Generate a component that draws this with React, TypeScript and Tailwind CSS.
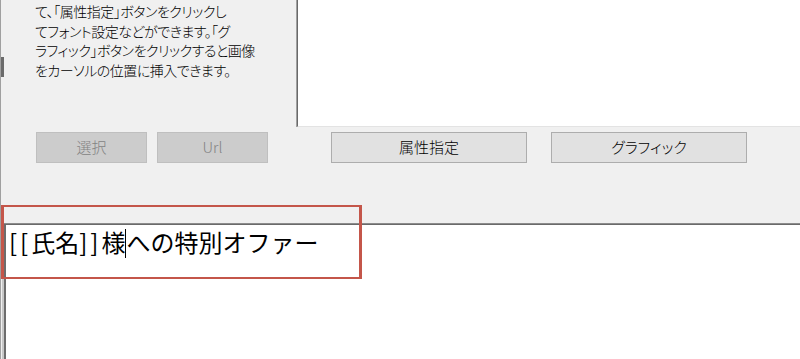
import React from "react";

const jp = "font-['Noto_Sans_CJK_JP','Noto_Sans',sans-serif]";

type TButton = {
  label: string;
  width: string;
  disabled?: boolean;
};

const FormButton = ({ label, width, disabled = false }: TButton) => {
  return (
    <button
      className={`${width} h-[31px] flex items-center justify-center text-[15px] font-light border ${
        disabled
          ? "bg-[#cccccc] border-[#bfbfbf] text-[#838383]"
          : "bg-[#e1e1e1] border-[#adadad] text-black"
      }`}
    >
      {label}
    </button>
  );
};

const App = () => {
  return (
    <div
      className={`${jp} relative w-[800px] h-[359px] bg-[#f0f0f0] flex flex-col overflow-hidden border-l border-[#a0a0a0] [font-feature-settings:'palt']`}
    >
      {/* edge of a neighbouring control, cut off at the left */}
      <div className="absolute left-0 top-[57px] w-[3px] h-[20px] bg-[#6b6b6b]" />

      <div className="flex h-[127px]">
        <div className="w-[295px] pl-[34px] pt-[2px] text-[14px] font-light tracking-[-0.5px] leading-[19.5px] text-black">
          <p>て、「属性指定」ボタンをクリックし</p>
          <p>てフォント設定などができます。「グ</p>
          <p>ラフィック」ボタンをクリックすると画像</p>
          <p>をカーソルの位置に挿入できます。</p>
        </div>
        <div className="flex-1 border-l border-[#a0a0a0]">
          <div className="h-full border-l border-b border-l-[#696969] border-b-[#e3e3e3] bg-white" />
        </div>
      </div>

      <div className="flex mt-[5px] pl-[35px]">
        <FormButton label="選択" width="w-[111px]" disabled />
        <div className="ml-[10px]">
          <FormButton label="Url" width="w-[111px]" disabled />
        </div>
        <div className="ml-[63px]">
          <FormButton label="属性指定" width="w-[196px]" />
        </div>
        <div className="ml-[24px]">
          <FormButton label="グラフィック" width="w-[196px]" />
        </div>
      </div>

      <div className="mt-[60px] flex-1 flex border-t border-[#8c8c8c]">
        <div className="flex-1 ml-px border-l-2 border-[#c8c8c8]">
          <div className="h-full border-l-2 border-t border-l-[#6d6d6d] border-t-[#6a6a6a] bg-white pl-[3px] pt-[2px] text-[24px] leading-[30px] text-black [font-feature-settings:normal]">
            <span className="tracking-[3px]">[[</span>
            氏名
            <span className="tracking-[3px]">]]</span>
            様
            <span className="inline-block w-px h-[29px] bg-black align-middle -mt-[3px]" />
            への特別オファー
          </div>
        </div>
      </div>

      <div className="absolute left-0 top-[205px] w-[361px] h-[74px] border-x-[3px] border-y-2 border-[#c4564a]" />
    </div>
  );
};

export default App;
